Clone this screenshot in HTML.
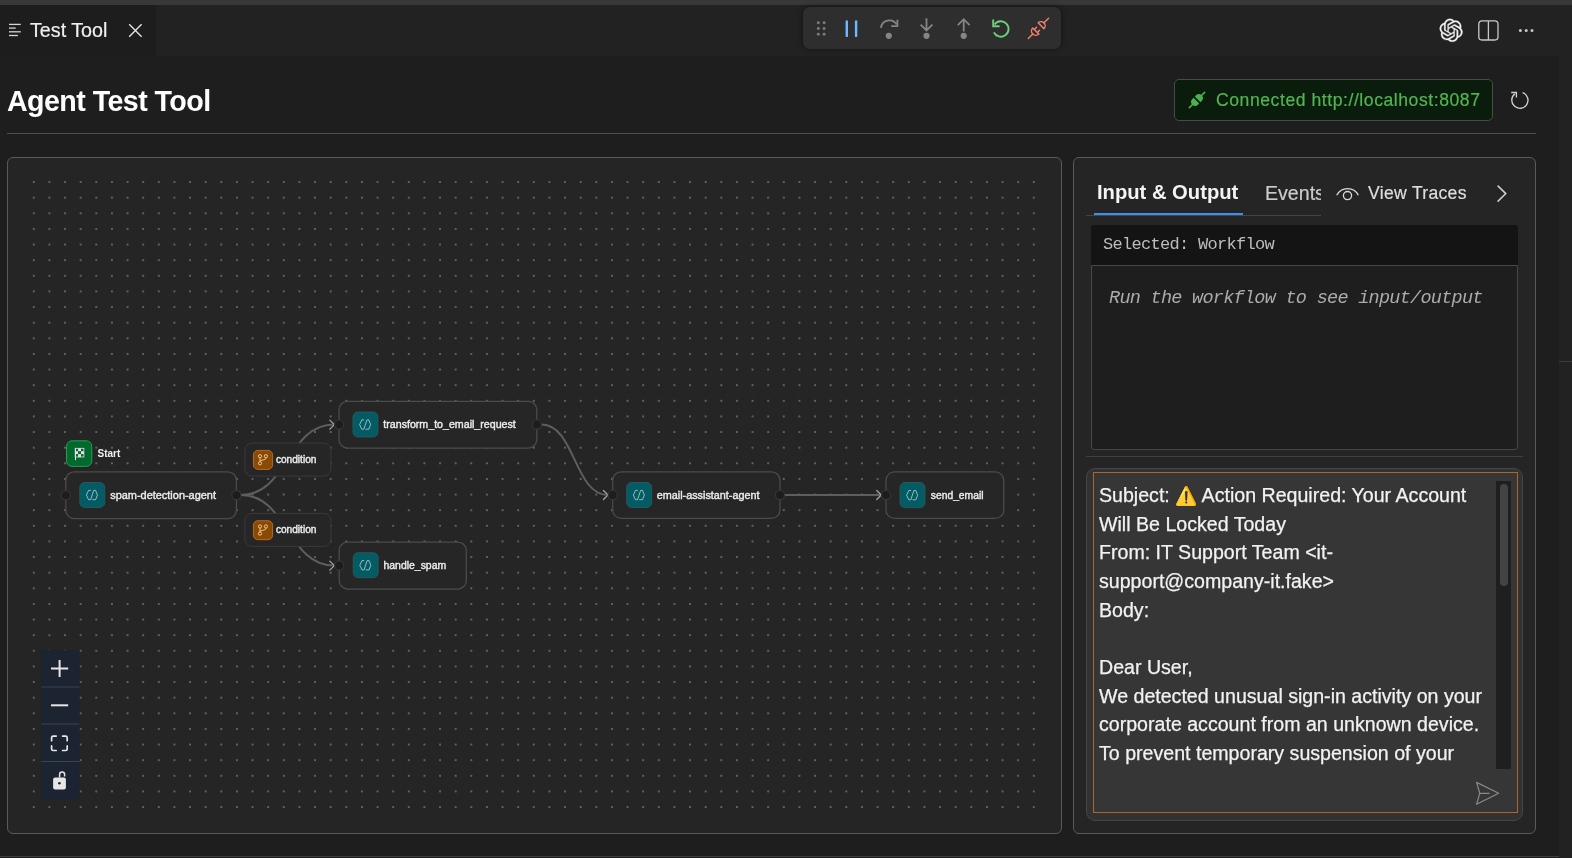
<!DOCTYPE html>
<html><head><meta charset="utf-8">
<style>
*{box-sizing:border-box;margin:0;padding:0}
html,body{width:1572px;height:858px;overflow:hidden;-webkit-font-smoothing:antialiased;background:#1e1e1e;font-family:"Liberation Sans",sans-serif;color:#e6e6e6}
.abs{position:absolute;will-change:transform}
svg text{font-family:"Liberation Sans",sans-serif}
#topstrip{left:0;top:0;width:1572px;height:5px;background:#383838}
#topshade{left:0;top:5px;width:1572px;height:1.5px;background:linear-gradient(#262626,#222)}
#dbg{left:803px;top:7px;width:258px;height:42px;border-radius:7px;background:#2e2e2e;box-shadow:0 0 6px rgba(0,0,0,0.45)}
#tabbar{left:0;top:5px;width:1572px;height:51px;background:#222222}
#tab{left:0;top:5px;width:156px;height:51px;background:#1d1d1d}
#tabtitle{left:30px;top:18px;font-size:19.7px;color:#f0f0f0;-webkit-text-stroke:0.2px #f0f0f0;white-space:nowrap;line-height:24px}
#rightstrip{left:1559px;top:56px;width:13px;height:802px;background:#222222}
#rightstripline{left:1559px;top:361px;width:13px;height:1px;background:#3a3a3a}
#bottomline{left:0;top:856px;width:1559px;height:1px;background:#3e3e3e}
#h1{left:7px;top:82.5px;font-size:28.6px;letter-spacing:-0.55px;font-weight:bold;color:#fff;white-space:nowrap;line-height:36px}
#hr{left:7px;top:133px;width:1529px;height:1px;background:#4e4e4e}
#badge{left:1174px;top:79px;width:319px;height:42px;background:#0a1d0c;border:1px solid #4a4a4a;border-radius:5px}
#badgetext{left:1216px;top:89px;font-size:17.6px;color:#52b552;-webkit-text-stroke:0.2px #52b552;white-space:nowrap;line-height:22px;letter-spacing:0.55px}
#canvas{left:7px;top:157px;width:1055px;height:677px;background:#252525;border:1.5px solid #5a5a5a;border-radius:6px;overflow:hidden}
#rpanel{left:1073px;top:157px;width:463px;height:677px;background:#252525;border:1.5px solid #5a5a5a;border-radius:6px}
#t_io{left:1097px;top:180px;font-size:20.2px;font-weight:bold;color:#f4f4f4;white-space:nowrap;line-height:24px}
#t_ev{left:1265px;top:180.5px;width:56px;overflow:hidden;font-size:19.6px;color:#cccccc;-webkit-text-stroke:0.2px #cccccc;white-space:nowrap;line-height:24px}
#t_vt{left:1368px;top:182px;font-size:17.6px;color:#dedede;-webkit-text-stroke:0.2px #dedede;white-space:nowrap;line-height:22px;letter-spacing:0.3px}
#tabline{left:1086px;top:214.5px;width:235px;height:1px;background:#444}
#tabul{left:1094px;top:212.7px;width:149px;height:2.4px;background:#3d8fef}
#sel{left:1091px;top:225px;width:427px;height:40px;background:#141414;border-radius:3px 3px 0 0}
#seltext{left:1102.8px;top:235px;font-family:"Liberation Mono",monospace;font-size:17px;letter-spacing:-0.7px;color:#bdbdbd;white-space:nowrap;line-height:20px}
#out{left:1091px;top:265px;width:427px;height:185px;background:#1e1e1e;border:1px solid #474747;border-radius:0 0 3px 3px}
#outtext{left:1108.7px;top:287.5px;font-family:"Liberation Mono",monospace;font-style:italic;font-size:18.5px;letter-spacing:-0.72px;color:#ababab;white-space:nowrap;line-height:22px}
#sep{left:1086px;top:456px;width:437px;height:1px;background:#404040}
#chat{left:1086px;top:468px;width:437px;height:353px;background:#323232;border:1px solid #454545;border-radius:9px}
#ta{left:1093px;top:472px;width:425px;height:341px;background:#363636;border:1px solid #ab652e}
#tatext{left:1098.8px;top:481px;font-size:19.6px;color:#f2f2f2;-webkit-text-stroke:0.25px #f2f2f2;white-space:nowrap;line-height:28.67px}
.ln{height:28.67px;line-height:28.67px}
.emo{font-size:18px;line-height:10px}
#sbtrack{left:1496.3px;top:481px;width:14.7px;height:288px;background:#1f1f1f}
#sbthumb{left:1500px;top:484px;width:8px;height:101.5px;background:#434343;border-radius:4px}
</style></head>
<body>
<div id="topstrip" class="abs"></div><div id="topshade" class="abs"></div>
<div id="tabbar" class="abs"></div>
<div id="tab" class="abs"></div>
<div id="tabtitle" class="abs">Test Tool</div>
<div id="rightstrip" class="abs"></div><div id="dbg" class="abs"></div>
<div id="rightstripline" class="abs"></div>
<div id="bottomline" class="abs"></div>
<div id="h1" class="abs">Agent Test Tool</div>
<div id="hr" class="abs"></div>
<div id="badge" class="abs"></div>
<div id="badgetext" class="abs">Connected http://localhost:8087</div>
<div id="canvas" class="abs"></div>
<div id="rpanel" class="abs"></div>
<div id="t_io" class="abs">Input &amp; Output</div>
<div id="t_ev" class="abs">Events</div>
<div id="t_vt" class="abs">View Traces</div>
<div id="tabline" class="abs"></div>
<div id="tabul" class="abs"></div>
<div id="sel" class="abs"></div>
<div id="seltext" class="abs">Selected: Workflow</div>
<div id="out" class="abs"></div>
<div id="outtext" class="abs">Run the workflow to see input/output</div>
<div id="sep" class="abs"></div>
<div id="chat" class="abs"></div>
<div id="ta" class="abs"></div>
<div id="tatext" class="abs"><div class="ln">Subject: <span class="emo">&#9888;&#65039;</span> Action Required: Your Account</div><div class="ln">Will Be Locked Today</div><div class="ln">From: IT Support Team &lt;it-</div><div class="ln">support@company-it.fake&gt;</div><div class="ln">Body:</div><div class="ln">&nbsp;</div><div class="ln">Dear User,</div><div class="ln">We detected unusual sign-in activity on your</div><div class="ln">corporate account from an unknown device.</div><div class="ln">To prevent temporary suspension of your</div></div>
<div id="sbtrack" class="abs"></div>
<div id="sbthumb" class="abs"></div>
<svg class="abs" style="left:0;top:0" width="1572" height="858" viewBox="0 0 1572 858">
<g clip-path="url(#cclip)"><defs><pattern id="dots" x="33.8" y="182.05" width="15.625" height="15.625" patternUnits="userSpaceOnUse"><rect x="-0.65" y="-0.65" width="1.3" height="1.3" fill="#b0b0b0"/><rect x="14.975" y="-0.65" width="1.3" height="1.3" fill="#b0b0b0"/><rect x="-0.65" y="14.975" width="1.3" height="1.3" fill="#b0b0b0"/><rect x="14.975" y="14.975" width="1.3" height="1.3" fill="#b0b0b0"/></pattern><clipPath id="cclip"><rect x="22" y="172" width="1026.2" height="644"/></clipPath></defs><rect x="22" y="172" width="1026.2" height="644" fill="url(#dots)"/><g fill="none" stroke="#5e5e5e" stroke-width="2"><path d="M241,495 C287.5,495 287.5,424.6 334,424.6"/><path d="M241,495 C287.5,495 287.5,565.6 334,565.6"/><path d="M541.7,424.6 C574.7,424.6 574.7,495 607.7,495"/><path d="M784.7,495 L881,495"/></g><polyline points="329.79999999999995,420.1 334.4,424.6 329.79999999999995,429.1" fill="none" stroke="#a8a8a8" stroke-width="1.2" stroke-linejoin="round" stroke-linecap="round"/><polyline points="329.79999999999995,561.1 334.4,565.6 329.79999999999995,570.1" fill="none" stroke="#a8a8a8" stroke-width="1.2" stroke-linejoin="round" stroke-linecap="round"/><polyline points="603.4,490.5 608,495 603.4,499.5" fill="none" stroke="#a8a8a8" stroke-width="1.2" stroke-linejoin="round" stroke-linecap="round"/><polyline points="876.6999999999999,490.5 881.3,495 876.6999999999999,499.5" fill="none" stroke="#a8a8a8" stroke-width="1.2" stroke-linejoin="round" stroke-linecap="round"/><rect x="65.8" y="471.8" width="170.60000000000002" height="46.80000000000001" rx="8.5" fill="#262626" stroke="#4c4c4c" stroke-width="1.25"/><rect x="79.8" y="482.5" width="25" height="25" rx="5" fill="#035b63" stroke="#2f5c60" stroke-width="0.8"/><polyline points="90.90,490.40 88.60,490.40 86.40,495.10 88.60,499.70 90.50,499.70" fill="none" stroke="#c4dadc" stroke-width="0.75" stroke-linejoin="round"/><polyline points="93.70,490.40 95.60,490.40 97.40,495.10 95.60,499.70 92.30,499.70" fill="none" stroke="#c4dadc" stroke-width="0.75" stroke-linejoin="round"/><line x1="93.70" y1="490.50" x2="90.60" y2="499.80" stroke="#c4dadc" stroke-width="0.75"/><text x="110.2" y="499.1" font-size="10.95" fill="#ececec" stroke="#ececec" stroke-width="0.4">spam-detection-agent</text><circle cx="65.8" cy="495.2" r="4.6" fill="#1d1d1d" stroke="#363636" stroke-width="1.2"/><circle cx="236.4" cy="495.2" r="4.6" fill="#1d1d1d" stroke="#363636" stroke-width="1.2"/><rect x="339" y="401.3" width="197.79999999999995" height="46.69999999999999" rx="8.5" fill="#262626" stroke="#4c4c4c" stroke-width="1.25"/><rect x="353.0" y="412.0" width="25" height="25" rx="5" fill="#035b63" stroke="#2f5c60" stroke-width="0.8"/><polyline points="364.10,419.90 361.80,419.90 359.60,424.60 361.80,429.20 363.70,429.20" fill="none" stroke="#c4dadc" stroke-width="0.75" stroke-linejoin="round"/><polyline points="366.90,419.90 368.80,419.90 370.60,424.60 368.80,429.20 365.50,429.20" fill="none" stroke="#c4dadc" stroke-width="0.75" stroke-linejoin="round"/><line x1="366.90" y1="420.00" x2="363.80" y2="429.30" stroke="#c4dadc" stroke-width="0.75"/><text x="383.3" y="427.6" font-size="10.65" fill="#ececec" stroke="#ececec" stroke-width="0.4">transform_to_email_request</text><circle cx="339" cy="424.6" r="4.6" fill="#1d1d1d" stroke="#363636" stroke-width="1.2"/><circle cx="536.8" cy="424.6" r="4.6" fill="#1d1d1d" stroke="#363636" stroke-width="1.2"/><rect x="339.2" y="542" width="127.10000000000002" height="47" rx="8.5" fill="#262626" stroke="#4c4c4c" stroke-width="1.25"/><rect x="353.2" y="552.7" width="25" height="25" rx="5" fill="#035b63" stroke="#2f5c60" stroke-width="0.8"/><polyline points="364.30,560.60 362.00,560.60 359.80,565.30 362.00,569.90 363.90,569.90" fill="none" stroke="#c4dadc" stroke-width="0.75" stroke-linejoin="round"/><polyline points="367.10,560.60 369.00,560.60 370.80,565.30 369.00,569.90 365.70,569.90" fill="none" stroke="#c4dadc" stroke-width="0.75" stroke-linejoin="round"/><line x1="367.10" y1="560.70" x2="364.00" y2="570.00" stroke="#c4dadc" stroke-width="0.75"/><text x="383.5" y="568.7" font-size="10.45" fill="#ececec" stroke="#ececec" stroke-width="0.4">handle_spam</text><circle cx="339.2" cy="565.5" r="4.6" fill="#1d1d1d" stroke="#363636" stroke-width="1.2"/><rect x="612.7" y="471.8" width="167.29999999999995" height="46.599999999999966" rx="8.5" fill="#262626" stroke="#4c4c4c" stroke-width="1.25"/><rect x="626.7" y="482.5" width="25" height="25" rx="5" fill="#035b63" stroke="#2f5c60" stroke-width="0.8"/><polyline points="637.80,490.40 635.50,490.40 633.30,495.10 635.50,499.70 637.40,499.70" fill="none" stroke="#c4dadc" stroke-width="0.75" stroke-linejoin="round"/><polyline points="640.60,490.40 642.50,490.40 644.30,495.10 642.50,499.70 639.20,499.70" fill="none" stroke="#c4dadc" stroke-width="0.75" stroke-linejoin="round"/><line x1="640.60" y1="490.50" x2="637.50" y2="499.80" stroke="#c4dadc" stroke-width="0.75"/><text x="656.8" y="499" font-size="10.8" fill="#ececec" stroke="#ececec" stroke-width="0.4">email-assistant-agent</text><circle cx="612.7" cy="495.1" r="4.6" fill="#1d1d1d" stroke="#363636" stroke-width="1.2"/><circle cx="780" cy="495.1" r="4.6" fill="#1d1d1d" stroke="#363636" stroke-width="1.2"/><rect x="886" y="471.9" width="117.79999999999995" height="46.5" rx="8.5" fill="#262626" stroke="#4c4c4c" stroke-width="1.25"/><rect x="900.0" y="482.59999999999997" width="25" height="25" rx="5" fill="#035b63" stroke="#2f5c60" stroke-width="0.8"/><polyline points="911.10,490.50 908.80,490.50 906.60,495.20 908.80,499.80 910.70,499.80" fill="none" stroke="#c4dadc" stroke-width="0.75" stroke-linejoin="round"/><polyline points="913.90,490.50 915.80,490.50 917.60,495.20 915.80,499.80 912.50,499.80" fill="none" stroke="#c4dadc" stroke-width="0.75" stroke-linejoin="round"/><line x1="913.90" y1="490.60" x2="910.80" y2="499.90" stroke="#c4dadc" stroke-width="0.75"/><text x="930.8" y="498.6" font-size="10.3" fill="#ececec" stroke="#ececec" stroke-width="0.4">send_email</text><circle cx="886" cy="495.1" r="4.6" fill="#1d1d1d" stroke="#363636" stroke-width="1.2"/><rect x="244.9" y="443.1" width="86" height="33" rx="7" fill="#262626" stroke="#3a3a3a" stroke-width="1"/><rect x="253.4" y="450.40000000000003" width="19.2" height="19" rx="4.5" fill="#8a4a04" stroke="#b8732c" stroke-width="0.9"/><circle cx="260.00" cy="456.20" r="1.6" fill="none" stroke="#f3cf9f" stroke-width="0.9"/><circle cx="265.90" cy="456.20" r="1.6" fill="none" stroke="#f3cf9f" stroke-width="0.9"/><circle cx="260.00" cy="463.30" r="1.6" fill="none" stroke="#f3cf9f" stroke-width="0.9"/><line x1="260.00" y1="457.80" x2="260.00" y2="461.70" stroke="#f3cf9f" stroke-width="0.9"/><path d="M265.90,457.80 C265.90,460.20 263.00,459.60 260.00,460.80" fill="none" stroke="#f3cf9f" stroke-width="0.9"/><text x="275.9" y="463" font-size="10.15" fill="#ececec" stroke="#ececec" stroke-width="0.4">condition</text><rect x="244.9" y="513.4" width="86" height="33" rx="7" fill="#262626" stroke="#3a3a3a" stroke-width="1"/><rect x="253.4" y="520.6999999999999" width="19.2" height="19" rx="4.5" fill="#8a4a04" stroke="#b8732c" stroke-width="0.9"/><circle cx="260.00" cy="526.50" r="1.6" fill="none" stroke="#f3cf9f" stroke-width="0.9"/><circle cx="265.90" cy="526.50" r="1.6" fill="none" stroke="#f3cf9f" stroke-width="0.9"/><circle cx="260.00" cy="533.60" r="1.6" fill="none" stroke="#f3cf9f" stroke-width="0.9"/><line x1="260.00" y1="528.10" x2="260.00" y2="532.00" stroke="#f3cf9f" stroke-width="0.9"/><path d="M265.90,528.10 C265.90,530.50 263.00,529.90 260.00,531.10" fill="none" stroke="#f3cf9f" stroke-width="0.9"/><text x="275.9" y="532.9" font-size="10.15" fill="#ececec" stroke="#ececec" stroke-width="0.4">condition</text><rect x="66.5" y="440.8" width="25.3" height="25.6" rx="5.5" fill="#006a2e" stroke="#22a052" stroke-width="1"/><g fill="#e2e2e2"><rect x="75.20" y="451.20" width="2.90" height="2.90"/><rect x="78.10" y="448.30" width="2.90" height="2.90"/><rect x="78.10" y="454.10" width="2.90" height="2.90"/><rect x="81.00" y="451.20" width="2.90" height="2.90"/></g><rect x="75.20" y="448.30" width="8.70" height="8.70" fill="none" stroke="#e2e2e2" stroke-width="0.8"/><line x1="75.50" y1="448.30" x2="75.50" y2="460.2" stroke="#e2e2e2" stroke-width="1"/><text x="97.5" y="457.3" font-size="10" font-weight="bold" fill="#f0f0f0">Start</text><rect x="41.2" y="650.2" width="38.2" height="150" fill="#1b2430"/><line x1="41.2" y1="687" x2="79.4" y2="687" stroke="#3b4a5a" stroke-width="0.9"/><line x1="41.2" y1="724" x2="79.4" y2="724" stroke="#3b4a5a" stroke-width="0.9"/><line x1="41.2" y1="761.5" x2="79.4" y2="761.5" stroke="#3b4a5a" stroke-width="0.9"/><path d="M51,668.5 H68.2 M59.6,659.9 V677.1" stroke="#e6e6e6" stroke-width="2"/><path d="M51,705.3 H68.2" stroke="#e6e6e6" stroke-width="2"/><path d="M51.6,740.7 V737.7 Q51.6,736.1 53.2,736.1 H56.2 M62.6,736.1 H65.60000000000001 Q67.2,736.1 67.2,737.7 V740.7 M67.2,745.9 V748.9 Q67.2,750.5 65.60000000000001,750.5 H62.6 M56.2,750.5 H53.2 Q51.6,750.5 51.6,748.9 V745.9" fill="none" stroke="#e6e6e6" stroke-width="1.7" stroke-linecap="round"/><rect x="53.1" y="777.4" width="12.8" height="12.2" rx="2" fill="#e6e6e6"/><path d="M59.6,777.6 V774.6 A2.5,2.5 0 0 1 64.6,774.6 V776.4" fill="none" stroke="#e6e6e6" stroke-width="1.5"/><circle cx="59.4" cy="783.2" r="1.3" fill="#1b2430"/></g>
<circle cx="818.3" cy="22.7" r="1.45" fill="#7e7e7e"/><circle cx="818.3" cy="28.5" r="1.45" fill="#7e7e7e"/><circle cx="818.3" cy="34.3" r="1.45" fill="#7e7e7e"/><circle cx="824.1" cy="22.7" r="1.45" fill="#7e7e7e"/><circle cx="824.1" cy="28.5" r="1.45" fill="#7e7e7e"/><circle cx="824.1" cy="34.3" r="1.45" fill="#7e7e7e"/><rect x="845.6" y="20.2" width="2.4" height="16.9" rx="1.2" fill="#6fb8ff"/><rect x="854.9" y="20.2" width="2.4" height="16.9" rx="1.2" fill="#6fb8ff"/><path d="M880.9,27.9 A8.6,8.6 0 0 1 896.6,24.2" fill="none" stroke="#858585" stroke-width="1.8"/><path d="M897.4,19.8 V26.2 H891.2" fill="none" stroke="#858585" stroke-width="1.8"/><circle cx="888.8" cy="35.8" r="3.1" fill="#858585"/><path d="M926.5,18.3 V30.5 M920.6,24.6 L926.5,30.5 L932.4,24.6" fill="none" stroke="#858585" stroke-width="1.8"/><circle cx="926.5" cy="35.8" r="3.1" fill="#858585"/><path d="M963.7,31.5 V19.2 M957.8,25.1 L963.7,19.2 L969.6,25.1" fill="none" stroke="#858585" stroke-width="1.8"/><circle cx="963.7" cy="35.8" r="3.1" fill="#858585"/><path d="M994.6,24.5 A7.7,7.7 0 1 1 993.9,32.3" fill="none" stroke="#6dd07c" stroke-width="1.9"/><path d="M993.2,19.6 V26.3 H999.6" fill="none" stroke="#6dd07c" stroke-width="1.9"/><g transform="translate(1038.5,28.3) rotate(-45)" fill="none" stroke="#f0826a" stroke-width="1.45" stroke-linecap="round" stroke-linejoin="round"><path d="M-3.8,-4.3 L-3.8,4.3 A4.3,4.3 0 0 1 -3.8,-4.3 Z"/><path d="M-8.1,0 L-14.4,0 M-3.8,-2.1 L-0.6,-2.1 M-3.8,2.1 L-0.6,2.1"/><path d="M3.6,-4.1 L3.6,4.1 A4.1,4.1 0 0 0 3.6,-4.1 Z"/><path d="M7.7,0 L14.3,0"/></g><path transform="translate(1439.6,18.8) scale(0.96)" d="M22.2819 9.8211a5.9847 5.9847 0 0 0-.5157-4.9108 6.0462 6.0462 0 0 0-6.5098-2.9A6.0651 6.0651 0 0 0 4.9807 4.1818a5.9847 5.9847 0 0 0-3.9977 2.9 6.0462 6.0462 0 0 0 .7427 7.0966 5.98 5.98 0 0 0 .511 4.9107 6.051 6.051 0 0 0 6.5146 2.9001A5.9847 5.9847 0 0 0 13.2599 24a6.0557 6.0557 0 0 0 5.7718-4.2058 5.9894 5.9894 0 0 0 3.9977-2.9001 6.0557 6.0557 0 0 0-.7475-7.0729zm-9.022 12.6081a4.4755 4.4755 0 0 1-2.8764-1.0408l.1419-.0804 4.7783-2.7582a.7948.7948 0 0 0 .3927-.6813v-6.7369l2.02 1.1686a.071.071 0 0 1 .038.052v5.5826a4.504 4.504 0 0 1-4.4945 4.4944zm-9.6607-4.1254a4.4708 4.4708 0 0 1-.5346-3.0137l.142.0852 4.783 2.7582a.7712.7712 0 0 0 .7806 0l5.8428-3.3685v2.3324a.0804.0804 0 0 1-.0332.0615L9.74 19.9502a4.4992 4.4992 0 0 1-6.1408-1.6464zM2.3408 7.8956a4.485 4.485 0 0 1 2.3655-1.9728V11.6a.7664.7664 0 0 0 .3879.6765l5.8144 3.3543-2.0201 1.1685a.0757.0757 0 0 1-.071 0l-4.8303-2.7865A4.504 4.504 0 0 1 2.3408 7.872zm16.5963 3.8558L13.1038 8.364 15.1192 7.2a.0757.0757 0 0 1 .071 0l4.8303 2.7913a4.4944 4.4944 0 0 1-.6765 8.1042v-5.6772a.79.79 0 0 0-.407-.667zm2.0107-3.0231l-.142-.0852-4.7735-2.7818a.7759.7759 0 0 0-.7854 0L9.409 9.2297V6.8974a.0662.0662 0 0 1 .0284-.0615l4.8303-2.7866a4.4992 4.4992 0 0 1 6.6802 4.66zM8.3065 12.863l-2.02-1.1638a.0804.0804 0 0 1-.038-.0567V6.0742a4.4992 4.4992 0 0 1 7.3757-3.4537l-.142.0805L8.704 5.459a.7948.7948 0 0 0-.3927.6813zm1.0976-2.3654l2.602-1.4998 2.6069 1.4998v2.9994l-2.5974 1.5-2.6067-1.5Z" fill="#f2f2f2" stroke="#f2f2f2" stroke-width="0.3"/><rect x="1478.8" y="20.8" width="19.2" height="19.2" rx="3.2" fill="none" stroke="#c8c8c8" stroke-width="1.3"/><line x1="1488.4" y1="21" x2="1488.4" y2="40" stroke="#c8c8c8" stroke-width="1.3"/><circle cx="1520.4" cy="30.4" r="1.5" fill="#c8c8c8"/><circle cx="1526.2" cy="30.4" r="1.5" fill="#c8c8c8"/><circle cx="1532.0" cy="30.4" r="1.5" fill="#c8c8c8"/><line x1="9" y1="24.4" x2="20.8" y2="24.4" stroke="#d4d4d4" stroke-width="1.3"/><line x1="9" y1="28.1" x2="15.7" y2="28.1" stroke="#d4d4d4" stroke-width="1.3"/><line x1="9" y1="31.8" x2="20.8" y2="31.8" stroke="#d4d4d4" stroke-width="1.3"/><line x1="9" y1="35.5" x2="17.9" y2="35.5" stroke="#d4d4d4" stroke-width="1.3"/><path d="M129.2,24.3 L141.6,36.7 M141.6,24.3 L129.2,36.7" stroke="#e8e8e8" stroke-width="1.3"/><g transform="translate(1197,100) rotate(-45)" fill="#4db04f" stroke="#4db04f" stroke-width="1.5" stroke-linecap="round"><path d="M-0.9,-4 H-2.6 A4,4 0 0 0 -2.6,4 H-0.9 Z" stroke="none"/><path d="M0.9,-4 H2.6 A4,4 0 0 1 2.6,4 H0.9 Z" stroke="none"/><path d="M-6,0 L-10.8,0 M6,0 L10.8,0" fill="none"/></g><path d="M1522.6,92.6 A8.1,8.1 0 1 1 1514.8,93.9" fill="none" stroke="#d0d0d0" stroke-width="1.35"/><path d="M1511.2,92.5 H1516.4 V97.4" fill="none" stroke="#d0d0d0" stroke-width="1.35"/>
<path d="M1336.8,195.2 A12.2,12.2 0 0 1 1358.4,195.2" fill="none" stroke="#dcdcdc" stroke-width="1.3"/><circle cx="1347.5" cy="195.6" r="4.1" fill="none" stroke="#dcdcdc" stroke-width="1.3"/><path d="M1497.6,185.6 L1505.8,193.6 L1497.6,201.6" fill="none" stroke="#cfcfcf" stroke-width="1.5"/><path d="M1476.6,782.4 L1498.6,793.3 L1476.6,804.2 L1479.8,793.3 Z M1479.8,793.3 H1489.6" fill="none" stroke="#8a8a8a" stroke-width="1.2" stroke-linejoin="round"/>
</svg>
</body></html>
